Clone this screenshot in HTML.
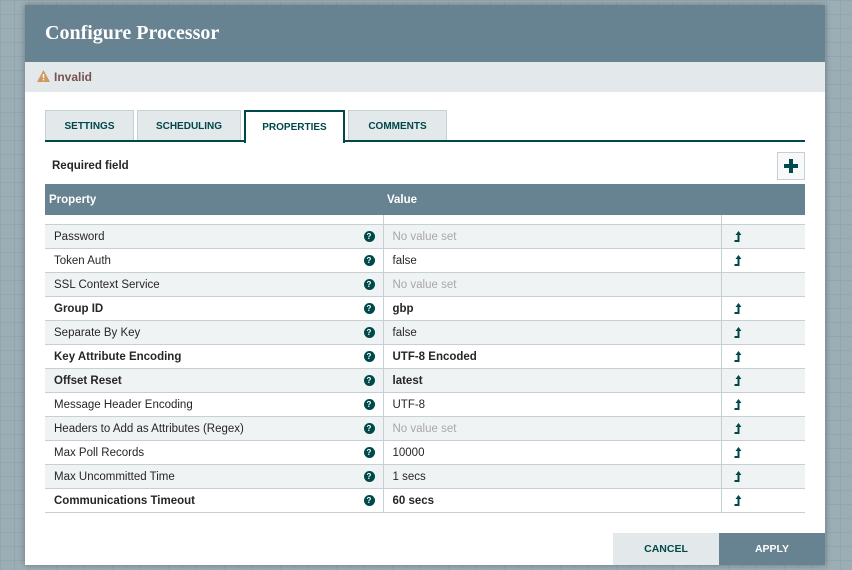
<!DOCTYPE html>
<html><head><style>
*{box-sizing:border-box;margin:0;padding:0}
body{width:852px;height:570px;overflow:hidden;position:relative;font-family:"Liberation Sans",sans-serif;
background-color:#9badb5;background-image:linear-gradient(#93a5ad 1px,transparent 1px),linear-gradient(90deg,#93a5ad 1px,transparent 1px);background-size:14px 14px}
.dlg{position:absolute;left:25px;top:5px;width:800px;height:560px;background:#fff;box-shadow:0 0 6px rgba(0,0,0,.3)}
.hd{height:57px;background:#678290;color:#fff;font-family:"Liberation Serif",serif;font-weight:bold;font-size:20px;padding:17px 0 0 20px}
.inv{height:30px;background:#e3e8eb;color:#775351;font-weight:bold;font-size:12px;padding:8px 0 0 29px;position:relative}
.tabs{position:absolute;top:105px;left:20px;width:760px;height:32px;border-bottom:2px solid #004849}
.tab{position:absolute;top:0;height:30px;background:#e3e8eb;border:1px solid #c6d0d4;border-bottom:none;color:#004849;font-size:10px;font-weight:bold;text-align:center;line-height:32px}
.tab.a{background:#fff;border:2px solid #004849;border-bottom:none;height:33px;z-index:2}
.req{position:absolute;left:27px;top:155px;font-size:11.5px;font-weight:bold;color:#262626}
.plus{position:absolute;left:752px;top:147px;width:28px;height:28px;border:1px solid #c6d0d4;background:#f8f9fa}
table{position:absolute;left:20px;top:179px;width:760px;border-collapse:collapse;font-size:11.5px;color:#262626}
th{background:#678290;color:#fff;text-align:left;height:31px;font-size:11.5px;padding-left:4px}
td{height:24px;border-bottom:1px solid #c6d0d4;padding-left:9px;padding-top:1px;position:relative}
td+td{border-left:1px solid #c6d0d4}
tr.g td{background:#f0f3f4}
.b{font-weight:bold}
.nv{color:#a8a8a8}
.q{position:absolute;right:8px;top:6px;width:11px;height:11px;border-radius:50%;background:#004849;color:#fff;font-size:8px;font-weight:bold;text-align:center;line-height:11px}
.ar svg{position:absolute;left:12px;top:5px}
.btn{position:absolute;top:528px;height:32px;width:106px;font-size:10.5px;font-weight:bold;text-align:center;line-height:32px}
</style></head><body>
<svg width="0" height="0" style="position:absolute"><defs><symbol id="ar" viewBox="0 0 8 12"><path d="M4.5 1L1.5 5H3.5V10H0.5V12H5.5V5H7.5z" fill="#004849"/></symbol></defs></svg>
<div class="dlg">
<div class="hd">Configure Processor</div>
<div class="inv"><svg style="position:absolute;left:12px;top:8px" width="13" height="12" viewBox="0 0 13 12"><path d="M6.5 0L13 12H0z" fill="#cf9a5f"/><rect x="5.8" y="4" width="1.4" height="4" fill="#fff"/><rect x="5.8" y="9" width="1.4" height="1.4" fill="#fff"/></svg>Invalid</div>
<div class="tabs">
<div class="tab" style="left:0;width:89px">SETTINGS</div>
<div class="tab" style="left:92px;width:104px">SCHEDULING</div>
<div class="tab a" style="left:199px;width:101px">PROPERTIES</div>
<div class="tab" style="left:303px;width:99px">COMMENTS</div>
</div>
<div class="req">Required field</div>
<div class="plus"><svg width="26" height="26" viewBox="0 0 26 26"><path d="M11 6h4v5h5v4h-5v5h-4v-5H6v-4h5z" fill="#004849"/></svg></div>
<table>
<tr><th style="width:338px">Property</th><th style="width:338px">Value</th><th></th></tr>
<tr><td style="height:9px;padding:0"></td><td style="height:9px;padding:0"></td><td style="height:9px;padding:0"></td></tr>
<tr class="g"><td>Password<span class="q">?</span></td><td class="nv">No value set</td><td class="ar"><svg width="8" height="12"><use href="#ar"/></svg></td></tr>
<tr><td>Token Auth<span class="q">?</span></td><td>false</td><td class="ar"><svg width="8" height="12"><use href="#ar"/></svg></td></tr>
<tr class="g"><td>SSL Context Service<span class="q">?</span></td><td class="nv">No value set</td><td></td></tr>
<tr><td class="b">Group ID<span class="q">?</span></td><td class="b">gbp</td><td class="ar"><svg width="8" height="12"><use href="#ar"/></svg></td></tr>
<tr class="g"><td>Separate By Key<span class="q">?</span></td><td>false</td><td class="ar"><svg width="8" height="12"><use href="#ar"/></svg></td></tr>
<tr><td class="b">Key Attribute Encoding<span class="q">?</span></td><td class="b">UTF-8 Encoded</td><td class="ar"><svg width="8" height="12"><use href="#ar"/></svg></td></tr>
<tr class="g"><td class="b">Offset Reset<span class="q">?</span></td><td class="b">latest</td><td class="ar"><svg width="8" height="12"><use href="#ar"/></svg></td></tr>
<tr><td>Message Header Encoding<span class="q">?</span></td><td>UTF-8</td><td class="ar"><svg width="8" height="12"><use href="#ar"/></svg></td></tr>
<tr class="g"><td>Headers to Add as Attributes (Regex)<span class="q">?</span></td><td class="nv">No value set</td><td class="ar"><svg width="8" height="12"><use href="#ar"/></svg></td></tr>
<tr><td>Max Poll Records<span class="q">?</span></td><td>10000</td><td class="ar"><svg width="8" height="12"><use href="#ar"/></svg></td></tr>
<tr class="g"><td>Max Uncommitted Time<span class="q">?</span></td><td>1 secs</td><td class="ar"><svg width="8" height="12"><use href="#ar"/></svg></td></tr>
<tr><td class="b">Communications Timeout<span class="q">?</span></td><td class="b">60 secs</td><td class="ar"><svg width="8" height="12"><use href="#ar"/></svg></td></tr>
</table>
<div class="btn" style="left:588px;background:#e3e8eb;color:#004849">CANCEL</div>
<div class="btn" style="left:694px;background:#678290;color:#fff">APPLY</div>
</div>
</body></html>
